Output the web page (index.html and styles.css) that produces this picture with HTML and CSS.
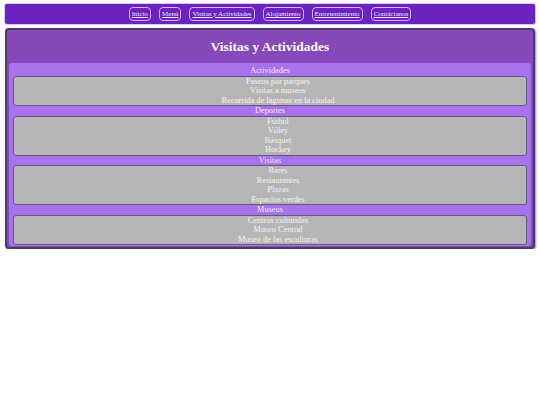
FILE: index.html
```html
<!DOCTYPE html>
<html lang="es">
<head>
<meta charset="utf-8">
<title>Visitas y Actividades</title>
<link rel="stylesheet" href="styles.css">
</head>
<body>
<nav class="nav">
  <a class="nav-link" href="#">Inicio</a>
  <a class="nav-link" href="#">Menú</a>
  <a class="nav-link" href="#">Visitas y Actividades</a>
  <a class="nav-link" href="#">Alojamiento</a>
  <a class="nav-link" href="#">Entretenimiento</a>
  <a class="nav-link" href="#">Contáctanos</a>
</nav>
<main class="main">
  <h1 class="title">Visitas y Actividades</h1>
  <div class="content">
    <h2 class="section-title">Actividades</h2>
    <ul class="box">
      <li>Paseos por parques</li>
      <li>Visitas a museos</li>
      <li>Recorrida de lagunas en la ciudad</li>
    </ul>
    <h2 class="section-title">Deportes</h2>
    <ul class="box">
      <li>Fútbol</li>
      <li>Vóley</li>
      <li>Básquet</li>
      <li>Hockey</li>
    </ul>
    <h2 class="section-title">Visitas</h2>
    <ul class="box">
      <li>Bares</li>
      <li>Restaurantes</li>
      <li>Plazas</li>
      <li>Espacios verdes</li>
    </ul>
    <h2 class="section-title">Museos</h2>
    <ul class="box">
      <li>Centros culturales</li>
      <li>Museo Central</li>
      <li>Museo de las esculturas</li>
    </ul>
  </div>
</main>
</body>
</html>
```

FILE: styles.css
```css
html, body {
  margin: 0;
  padding: 0;
  background: #ffffff;
}
body {
  padding: 3px 4px 0;
  font-family: "Liberation Serif", "Times New Roman", serif;
  color: #ffffff;
}
.nav {
  height: 20px;
  background: #6c22c0;
  border: 1px solid #d9c4f2;
  border-radius: 3px;
  display: flex;
  align-items: center;
  justify-content: center;
  gap: 8px;
}
.nav-link {
  font-size: 7px;
  line-height: 8px;
  padding: 2px 2px;
  border: 1px solid #cfb2f3;
  border-radius: 4px;
  color: #efe6ff;
  text-decoration: underline;
}
.main {
  margin: 3px 1px 0;
  border: 2px solid #4d3d66;
  border-radius: 4px;
  background: #8549b9;
  padding: 0 2px 1px;
  box-shadow: 1px 1px 2px rgba(0, 0, 0, 0.45);
}
.title {
  margin: 0;
  height: 33px;
  line-height: 33px;
  text-align: center;
  font-size: 13.5px;
  font-weight: bold;
  color: #ffffff;
}
.content {
  background: #a673ec;
  border-radius: 3px;
  padding: 3px 4px 1px;
}
.section-title {
  margin: 0;
  font-size: 8.3px;
  font-weight: normal;
  line-height: 9.5px;
  text-align: center;
  color: #f4ecff;
}
.box {
  list-style: none;
  margin: 0;
  padding: 0 0 0 16px;
  background: #b5b5b5;
  border: 1px solid #6a5586;
  border-radius: 3px;
  text-align: center;
  font-size: 8.4px;
  line-height: 9.5px;
  color: #f3f3f3;
}
```
